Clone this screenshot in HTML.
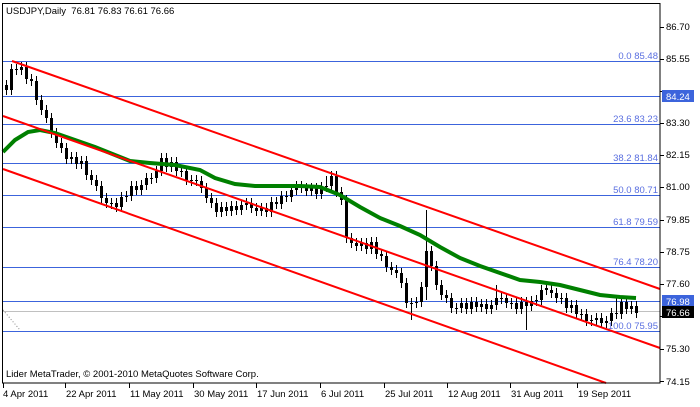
<!DOCTYPE html>
<html><head><meta charset="utf-8"><style>
body{margin:0;background:#fff;width:700px;height:402px;overflow:hidden;font-family:"Liberation Sans",sans-serif}
svg text{font-family:"Liberation Sans",sans-serif;font-size:9.5px}
</style></head><body>
<svg width="700" height="402" xmlns="http://www.w3.org/2000/svg">
<rect x="0" y="0" width="700" height="402" fill="#fff"/>
<g stroke="#3c64dc" stroke-width="1">
<line x1="3" y1="61.5" x2="660" y2="61.5"/>
<line x1="3" y1="96.5" x2="660" y2="96.5"/>
<line x1="3" y1="124.5" x2="660" y2="124.5"/>
<line x1="3" y1="163.5" x2="660" y2="163.5"/>
<line x1="3" y1="195.5" x2="660" y2="195.5"/>
<line x1="3" y1="227.5" x2="660" y2="227.5"/>
<line x1="3" y1="267.5" x2="660" y2="267.5"/>
<line x1="3" y1="301.5" x2="660" y2="301.5"/>
<line x1="3" y1="331.5" x2="660" y2="331.5"/>
</g>
<line x1="3" y1="311.5" x2="660" y2="311.5" stroke="#c0c0c0"/>
<path fill="none" stroke="#000" stroke-width="1" d="M6.5 80V95M11.5 64V95M16.5 64V75M21.5 62V75M26.5 62V84M31.5 74V86M36.5 76V105M41.5 95V115M46.5 105V123M51.5 113V138M56.5 128V148M61.5 138V153M66.5 143V164M71.5 152V164M76.5 152V169M81.5 156V169M86.5 156V180M91.5 170V185M96.5 175V191M101.5 181V203M106.5 193V208M111.5 198V209M116.5 198V212M121.5 192V212M126.5 191V202M131.5 181V201M136.5 181V195M141.5 180V195M146.5 173V190M151.5 173V184M156.5 166V183M161.5 153V176M166.5 153V172M171.5 157V172M176.5 157V176M181.5 166V177M186.5 166V185M191.5 175V186M196.5 175V186M201.5 176V193M206.5 183V203M211.5 193V208M216.5 198V217M221.5 202V217M226.5 202V216M231.5 201V216M236.5 201V215M241.5 200V215M246.5 198V210M251.5 198V213M256.5 203V216M261.5 203V216M266.5 203V217M271.5 197V217M276.5 197V209M281.5 191V209M286.5 191V202M291.5 185V202M296.5 181V195M301.5 181V193M306.5 183V196M311.5 183V196M316.5 183V199M321.5 182V199M326.5 176V192M331.5 171V191M336.5 171V197M341.5 187V205M346.5 195V243M351.5 233V248M356.5 238V251M361.5 238V251M366.5 238V254M371.5 237V254M376.5 237V259M381.5 249V261M386.5 251V272M391.5 262V275M396.5 265V278M401.5 268V288M406.5 278V308M411.5 298V320M416.5 297V308M421.5 282V307M426.5 210V300M431.5 246V271M436.5 261V290M441.5 280V300M446.5 290V303M451.5 293V313M456.5 303V314M461.5 298V313M466.5 298V314M471.5 297V314M476.5 297V312M481.5 299V312M486.5 299V314M491.5 300V314M496.5 285V310M501.5 293V304M506.5 293V308M511.5 298V309M516.5 298V314M521.5 297V314M526.5 297V330M531.5 296V311M536.5 295V306M541.5 285V305M546.5 283V295M551.5 285V298M556.5 288V303M561.5 293V304M566.5 293V313M571.5 300V313M576.5 300V319M581.5 309V320M586.5 309V326M591.5 315V326M596.5 313V325M601.5 313V328M606.5 316V328M611.5 308V326M616.5 298V319M621.5 297V319M626.5 297V314M631.5 301V314M636.5 301V318"/>
<path fill="#000" d="M5 85h3V90h-3zM10 69h3V90h-3zM15 69h3V70h-3zM20 67h3V70h-3zM25 67h3V79h-3zM30 79h3V81h-3zM35 81h3V100h-3zM40 100h3V110h-3zM45 110h3V118h-3zM50 118h3V133h-3zM55 133h3V143h-3zM60 143h3V148h-3zM65 148h3V159h-3zM70 157h3V159h-3zM75 157h3V164h-3zM80 161h3V164h-3zM85 161h3V175h-3zM90 175h3V180h-3zM95 180h3V186h-3zM100 186h3V198h-3zM105 198h3V203h-3zM110 203h3V204h-3zM115 203h3V207h-3zM120 197h3V207h-3zM125 196h3V197h-3zM130 186h3V196h-3zM135 186h3V190h-3zM140 185h3V190h-3zM145 178h3V185h-3zM150 178h3V179h-3zM155 171h3V178h-3zM160 158h3V171h-3zM165 158h3V167h-3zM170 162h3V167h-3zM175 162h3V171h-3zM180 171h3V172h-3zM185 171h3V180h-3zM190 180h3V181h-3zM195 180h3V181h-3zM200 181h3V188h-3zM205 188h3V198h-3zM210 198h3V203h-3zM215 203h3V212h-3zM220 207h3V212h-3zM225 207h3V211h-3zM230 206h3V211h-3zM235 206h3V210h-3zM240 205h3V210h-3zM245 203h3V205h-3zM250 203h3V208h-3zM255 208h3V211h-3zM260 208h3V211h-3zM265 208h3V212h-3zM270 202h3V212h-3zM275 202h3V204h-3zM280 196h3V204h-3zM285 196h3V197h-3zM290 190h3V197h-3zM295 186h3V190h-3zM300 186h3V188h-3zM305 188h3V191h-3zM310 188h3V191h-3zM315 188h3V194h-3zM320 187h3V194h-3zM325 186h3V187h-3zM330 176h3V186h-3zM335 176h3V192h-3zM340 192h3V200h-3zM345 200h3V238h-3zM350 238h3V243h-3zM355 243h3V246h-3zM360 243h3V246h-3zM365 243h3V249h-3zM370 242h3V249h-3zM375 242h3V254h-3zM380 254h3V256h-3zM385 256h3V267h-3zM390 267h3V270h-3zM395 270h3V273h-3zM400 273h3V283h-3zM405 283h3V303h-3zM410 303h3V304h-3zM415 302h3V303h-3zM420 287h3V302h-3zM425 251h3V287h-3zM430 251h3V266h-3zM435 266h3V285h-3zM440 285h3V295h-3zM445 295h3V298h-3zM450 298h3V308h-3zM455 308h3V309h-3zM460 303h3V308h-3zM465 303h3V309h-3zM470 302h3V309h-3zM475 302h3V307h-3zM480 304h3V307h-3zM485 304h3V309h-3zM490 305h3V309h-3zM495 298h3V305h-3zM500 298h3V299h-3zM505 298h3V303h-3zM510 303h3V304h-3zM515 303h3V309h-3zM520 302h3V309h-3zM525 302h3V306h-3zM530 301h3V306h-3zM535 300h3V301h-3zM540 290h3V300h-3zM545 288h3V290h-3zM550 290h3V293h-3zM555 293h3V298h-3zM560 298h3V299h-3zM565 298h3V308h-3zM570 305h3V308h-3zM575 305h3V314h-3zM580 314h3V315h-3zM585 314h3V321h-3zM590 320h3V321h-3zM595 318h3V320h-3zM600 318h3V323h-3zM605 321h3V323h-3zM610 313h3V321h-3zM615 313h3V314h-3zM620 302h3V314h-3zM625 302h3V309h-3zM630 306h3V309h-3zM635 306h3V313h-3z"/>
<polyline fill="none" stroke="#008000" stroke-width="4" points="3,152 15,140 28,132 40,130 55,133 75,140 95,147 115,155 130,161 150,163 175,165 200,170 215,178 235,184 255,186 275,186 300,186 320,187 340,195 360,207 380,218 400,226 420,235 440,247 460,258 480,266 500,273 520,280 540,282 560,285 580,290 600,295 620,297 636,298"/>
<g stroke="#ff0000" stroke-width="2">
<line x1="12" y1="61" x2="660" y2="289"/>
<line x1="3" y1="116" x2="660" y2="348"/>
<line x1="3" y1="169" x2="606" y2="383"/>
</g>
<g fill="#5a6fe0" text-anchor="end">
<text x="658" y="59">0.0 85.48</text>
<text x="658" y="122">23.6 83.23</text>
<text x="658" y="161">38.2 81.84</text>
<text x="658" y="193">50.0 80.71</text>
<text x="658" y="225">61.8 79.59</text>
<text x="658" y="265">76.4 78.20</text>
<text x="658" y="329">100.0 75.95</text>
</g>
<line x1="3" y1="310" x2="20" y2="330" stroke="#888" stroke-dasharray="1,2"/>
<rect x="2.5" y="3.5" width="657.5" height="379.5" fill="none" stroke="#000"/>
<path stroke="#000" d="M660 27.5h4M660 59.5h4M660 91.5h4M660 123.5h4M660 155.5h4M660 187.5h4M660 220.5h4M660 252.5h4M660 284.5h4M660 316.5h4M660 349.5h4M660 381.5h4M3.5 383v5M65.5 383v5M129.5 383v5M193.5 383v5M256.5 383v5M320.5 383v5M384.5 383v5M447.5 383v5M510.5 383v5M577.5 383v5"/>
<g fill="#000">
<text x="666" y="30">86.70</text>
<text x="666" y="62">85.55</text>
<text x="666" y="126">83.30</text>
<text x="666" y="158">82.15</text>
<text x="666" y="190">81.00</text>
<text x="666" y="223">79.85</text>
<text x="666" y="255">78.75</text>
<text x="666" y="287">77.60</text>
<text x="666" y="352">75.30</text>
<text x="666" y="385">74.15</text>
</g>
<rect x="662" y="90" width="32" height="12" fill="#3c64dc"/>
<text x="666" y="100" fill="#fff">84.24</text>
<rect x="662" y="295" width="32" height="12" fill="#3c64dc"/>
<text x="666" y="305" fill="#fff">76.98</text>
<rect x="662" y="306" width="32" height="12" fill="#000"/>
<text x="666" y="316" fill="#fff">76.66</text>
<text x="6" y="14" fill="#000" xml:space="preserve">USDJPY,Daily  76.81 76.83 76.61 76.66</text>
<text x="6" y="377" fill="#000">Lider MetaTrader, © 2001-2010 MetaQuotes Software Corp.</text>
<g fill="#000">
<text x="3" y="397">4 Apr 2011</text>
<text x="66" y="397">22 Apr 2011</text>
<text x="130" y="397">11 May 2011</text>
<text x="194" y="397">30 May 2011</text>
<text x="257" y="397">17 Jun 2011</text>
<text x="321" y="397">6 Jul 2011</text>
<text x="385" y="397">25 Jul 2011</text>
<text x="448" y="397">12 Aug 2011</text>
<text x="511" y="397">31 Aug 2011</text>
<text x="578" y="397">19 Sep 2011</text>
</g>
</svg>
</body></html>
